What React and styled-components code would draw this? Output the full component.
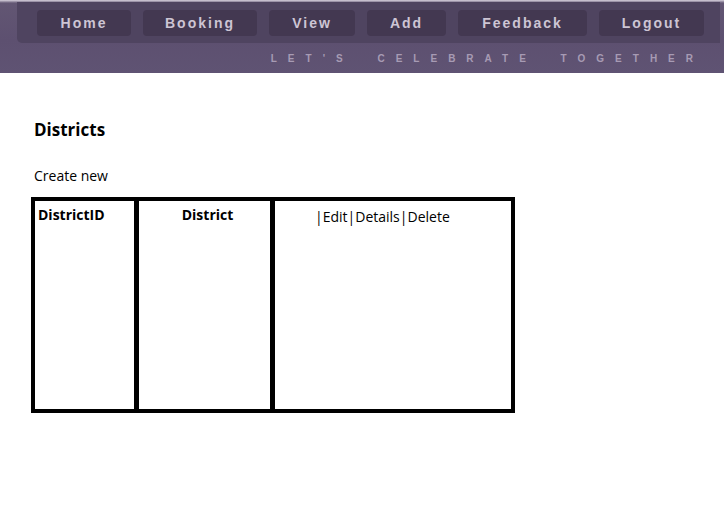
import React from "react";
import styled, { createGlobalStyle } from "styled-components";

const navItems = ["Home", "Booking", "View", "Add", "Feedback", "Logout"];
const navWidths = [94, 114, 86, 79, 129, 105];

const App = () => {
  return (
    <>
      <GlobalStyle />
      <Banner>
        <NavPanel>
          {navItems.map((item, i) => (
            <NavButton key={item} style={{ width: navWidths[i] }}>{item}</NavButton>
          ))}
        </NavPanel>
        <Tagline>LET'S CELEBRATE TOGETHER</Tagline>
      </Banner>
      <Content>
        <Title>Districts</Title>
        <CreateLink>Create new</CreateLink>
        <Table>
          <Cell width={99}>
            <HeadText>DistrictID</HeadText>
          </Cell>
          <Cell width={136} divided>
            <HeadText center>District</HeadText>
          </Cell>
          <Cell grow divided>
            <Actions>|Edit|Details|Delete</Actions>
          </Cell>
        </Table>
      </Content>
    </>
  );
};

export default App;

const GlobalStyle = createGlobalStyle`
  body {
    margin: 0;
    background: #fff;
    font-family: "Open Sans", "Noto Sans", sans-serif;
    color: #000;
  }
`;

const Banner = styled.div`
  height: 73px;
  background: linear-gradient(180deg, #d8d2de 0px, #625673 3px, #5d5070 40px, #5f5373 73px);
  display: flex;
  flex-direction: column;
`;

const NavPanel = styled.div`
  margin: 2px 4px 0 17px;
  height: 41px;
  background: #4f4460;
  border-radius: 0 0 0 5px;
  display: flex;
  align-items: center;
  gap: 12px;
  padding-left: 20px;
  box-sizing: border-box;
`;

const NavButton = styled.div`
  height: 26px;
  border-radius: 4px;
  background: #433851;
  color: #cdc5d4;
  font-family: "Liberation Sans", Arial, sans-serif;
  font-weight: bold;
  font-size: 14px;
  letter-spacing: 2px;
  display: flex;
  align-items: center;
  justify-content: center;
`;

const Tagline = styled.div`
  flex: 1;
  display: flex;
  align-items: center;
  justify-content: flex-end;
  padding-right: 20px;
  color: #a79bb4;
  font-family: "Liberation Sans", Arial, sans-serif;
  font-weight: bold;
  font-size: 10px;
  letter-spacing: 11px;
  word-spacing: 10px;
`;

const Content = styled.div`
  padding: 44px 0 0 31px;
`;

const Title = styled.h1`
  margin: 0;
  padding-left: 3px;
  font-size: 17px;
  font-weight: bold;
  line-height: 25px;
`;

const CreateLink = styled.div`
  margin-top: 24px;
  padding-left: 3px;
  font-size: 14px;
  line-height: 19px;
`;

const Table = styled.div`
  margin-top: 12px;
  display: flex;
  width: 484px;
  height: 216px;
  border: 4px solid #000;
  box-sizing: border-box;
`;

const Cell = styled.div`
  width: ${(props) => (props.width ? `${props.width}px` : "auto")};
  flex: ${(props) => (props.grow ? "1" : "none")};
  border-left: ${(props) => (props.divided ? "5px solid #000" : "none")};
  padding: 4px 3px;
  box-sizing: border-box;
`;

const HeadText = styled.div`
  font-size: 14px;
  font-weight: bold;
  line-height: 19px;
  text-align: ${(props) => (props.center ? "center" : "left")};
  padding-left: ${(props) => (props.center ? "6px" : "0")};
`;

const Actions = styled.div`
  font-size: 14px;
  line-height: 19px;
  color: #000;
  padding: 2px 0 0 37px;
`;
